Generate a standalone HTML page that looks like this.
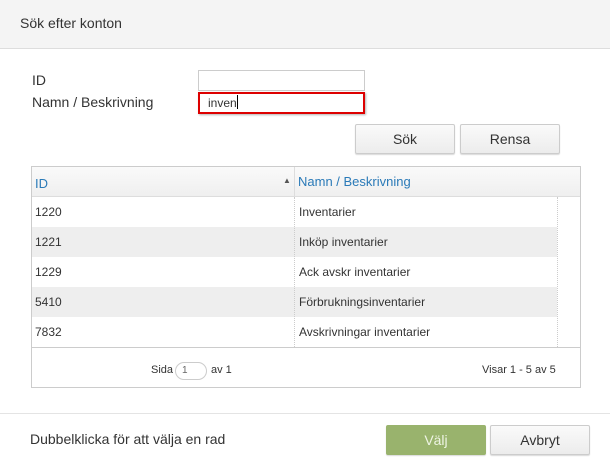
<!DOCTYPE html>
<html><head><meta charset="utf-8"><style>
*{box-sizing:border-box;margin:0;padding:0}
body{width:610px;height:466px;background:#fff;font-family:"Liberation Sans",sans-serif;color:#333;position:relative;overflow:hidden}
.a{position:absolute}
.hdr{left:0;top:0;width:610px;height:49px;background:#f4f4f4;border-bottom:1px solid #ddd}
.btn{position:absolute;border:1px solid #ccc;border-radius:2px;background:linear-gradient(#fafafa,#ececec);box-shadow:0 1px 1px rgba(0,0,0,.15);font-size:14px;text-align:center;line-height:29px;color:#333}
.row{position:absolute;left:32px;width:525px;height:30px;font-size:12px;line-height:30px}
.row span{position:absolute}
.g{background:#eee}
</style></head><body>
<div class="a hdr"></div>
<div class="a" style="left:20px;top:15px;font-size:14px">Sök efter konton</div>
<div class="a" style="left:32px;top:72px;font-size:14px">ID</div>
<div class="a" style="left:32px;top:94px;font-size:14px">Namn / Beskrivning</div>
<div class="a" style="left:198px;top:70px;width:167px;height:21px;border:1px solid #ccc"></div>
<div class="a" style="left:198px;top:92px;width:167px;height:22px;border:2px solid #d00;box-shadow:1px 1px 2px rgba(0,0,0,.3);font-size:12px;padding-left:8px;line-height:18px">inven<span style="display:inline-block;width:1px;height:14px;background:#000;vertical-align:-2px"></span></div>
<div class="btn" style="left:355px;top:124px;width:100px;height:30px">Sök</div>
<div class="btn" style="left:460px;top:124px;width:100px;height:30px">Rensa</div>
<div class="a" style="left:31px;top:166px;width:550px;height:222px;border:1px solid #ccc"></div>
<div class="a" style="left:32px;top:167px;width:548px;height:30px;background:linear-gradient(#fafafa,#efefef);border-bottom:1px solid #ddd"></div>
<div class="a" style="left:294px;top:167px;height:30px;border-left:1px solid #ddd"></div>
<div class="a" style="left:35px;top:176px;font-size:13px;color:#2a7ab8">ID</div>
<div class="a" style="left:283px;top:176px;font-size:8px;color:#555">▲</div>
<div class="a" style="left:298px;top:174px;font-size:13px;color:#2a7ab8">Namn / Beskrivning</div>
<div class="row" style="top:197px"><span style="left:3px">1220</span><span style="left:267px">Inventarier</span></div>
<div class="row g" style="top:227px"><span style="left:3px">1221</span><span style="left:267px">Inköp inventarier</span></div>
<div class="row" style="top:257px"><span style="left:3px">1229</span><span style="left:267px">Ack avskr inventarier</span></div>
<div class="row g" style="top:287px"><span style="left:3px">5410</span><span style="left:267px">Förbrukningsinventarier</span></div>
<div class="row" style="top:317px"><span style="left:3px">7832</span><span style="left:267px">Avskrivningar inventarier</span></div>
<div class="a" style="left:294px;top:197px;height:150px;border-left:1px dotted #ccc"></div>
<div class="a" style="left:557px;top:197px;height:150px;border-left:1px dotted #ccc"></div>
<div class="a" style="left:31px;top:347px;width:550px;border-top:1px solid #ccc"></div>
<div class="a" style="left:151px;top:364px;font-size:11px">Sida</div>
<div class="a" style="left:175px;top:362px;width:32px;height:18px;border:1px solid #ccc;border-radius:9px;font-size:10px;padding-left:6px;line-height:16px;color:#666">1</div>
<div class="a" style="left:211px;top:364px;font-size:11px">av 1</div>
<div class="a" style="left:482px;top:364px;font-size:11px">Visar 1 - 5 av 5</div>
<div class="a" style="left:0;top:413px;width:610px;border-top:1px solid #e4e4e4"></div>
<div class="a" style="left:30px;top:431px;font-size:14px">Dubbelklicka för att välja en rad</div>
<div class="btn" style="left:386px;top:425px;width:100px;height:30px;background:#99b36d;border-color:#99b36d;color:#eef4e4">Välj</div>
<div class="btn" style="left:490px;top:425px;width:100px;height:30px">Avbryt</div>
</body></html>
